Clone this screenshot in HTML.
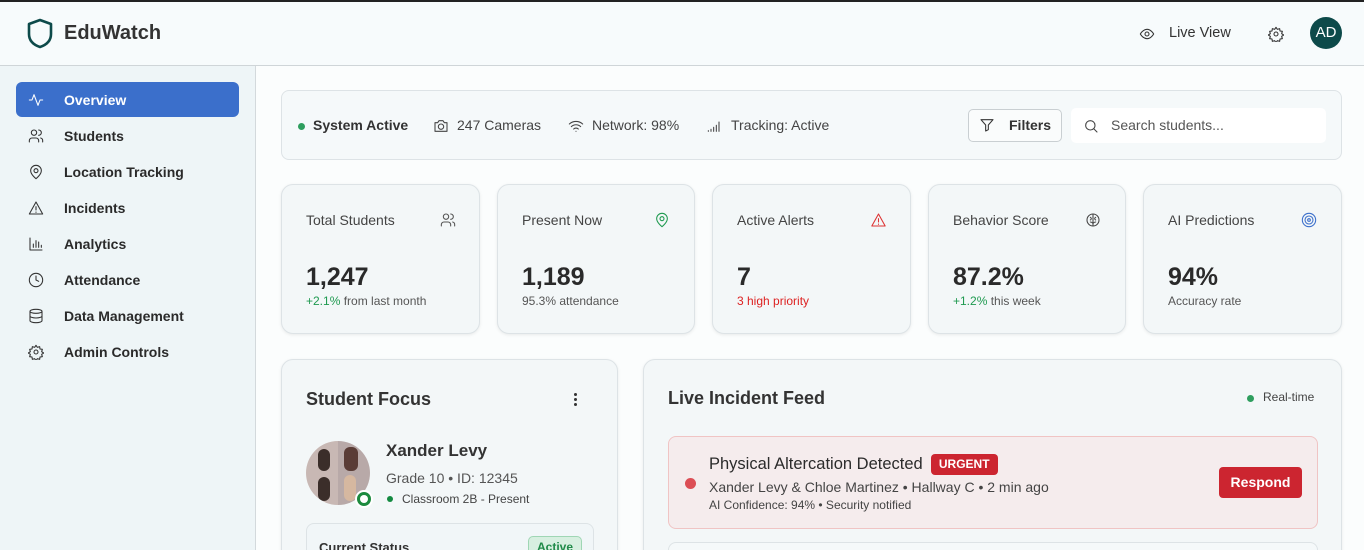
<!DOCTYPE html>
<html><head><meta charset="utf-8"><style>
*{box-sizing:border-box;margin:0;padding:0}
html,body{width:1364px;height:550px;overflow:hidden}
body{font-family:"Liberation Sans",sans-serif;color:#2b2b2b;background:#fbfdfd;position:relative}
#wrap{position:absolute;left:0;top:0;width:1364px;height:550px;overflow:hidden}
.abs{position:absolute}
.hdr{left:0;top:0;width:1364px;height:66px;background:#f7fbfc;border-top:2px solid #222;border-bottom:1px solid #cfd5d8}
.side{left:0;top:66px;width:256px;height:484px;background:#eef5f7;border-right:1px solid #d3d9dc}
.nav{position:absolute;left:16px;width:223px;height:35px;border-radius:6px;display:flex;align-items:center;font-size:14px;font-weight:bold;color:#2a2a2a}
.nav svg{position:absolute;left:12px}
.nav span{position:absolute;left:48px}
.card{position:absolute;background:#f3f7f8;border:1px solid #dde3e6;border-radius:12px;box-shadow:0 1px 3px rgba(0,0,0,.08)}
.st .t{position:absolute;left:24px;top:27px;font-size:14px;color:#444}
.st .v{position:absolute;left:24px;top:78px;font-size:25px;font-weight:bold;color:#2a2a2a}
.st .s{position:absolute;left:24px;top:109px;font-size:12px;color:#555}
.st svg{position:absolute;top:27px}
svg{fill:none;stroke-width:1.6;stroke-linecap:round;stroke-linejoin:round}
.g{color:#1f9a50}
</style></head><body><div id="wrap">
<div class="abs hdr">
 <svg class="abs" style="left:27px;top:16px" width="26" height="31" viewBox="0 0 26 31"><path d="M13 2 L24 6 V16 C24 23 19 27 13 29 C7 27 2 23 2 16 V6 Z" stroke="#0d4a4a" stroke-width="2.6"/></svg>
 <div class="abs" style="left:64px;top:20px;font-size:20px;font-weight:bold;color:#333">EduWatch</div>
 <svg class="abs" style="left:1139px;top:24px" width="16" height="16" viewBox="0 0 24 24" stroke="#333"><path d="M2 12s4-7 10-7 10 7 10 7-4 7-10 7S2 12 2 12z"/><circle cx="12" cy="12" r="3"/></svg>
 <div class="abs" style="left:1169px;top:23px;font-size:14.5px;color:#333">Live View</div>
 <svg class="abs" style="left:1268px;top:24px" width="16" height="16" viewBox="0 0 24 24" stroke="#333"><circle cx="12" cy="12" r="3"/><path d="M12 2l2 3 3.5-1 .5 3.5 3.5.5-1 3.5 3 2-3 2 1 3.5-3.5.5-.5 3.5-3.5-1-2 3-2-3-3.5 1-.5-3.5-3.5-.5 1-3.5-3-2 3-2-1-3.5 3.5-.5.5-3.5 3.5 1z"/></svg>
 <div class="abs" style="left:1310px;top:15px;width:32px;height:32px;border-radius:50%;background:#0d4a4a;color:#fff;font-size:15px;text-align:center;line-height:32px">AD</div>
</div>
<div class="abs side">
 <div class="nav" style="top:16px;background:#3b6fcb;color:#fff"><svg width="16" height="16" viewBox="0 0 24 24" stroke="#fff"><path d="M2 12h4l3-8 6 16 3-8h4"/></svg><span>Overview</span></div>
 <div class="nav" style="top:52px"><svg width="16" height="16" viewBox="0 0 24 24" stroke="#333"><circle cx="9" cy="7" r="4"/><path d="M2 21v-2a4 4 0 014-4h6a4 4 0 014 4v2M16 3a4 4 0 010 8M22 21v-2a4 4 0 00-3-4"/></svg><span>Students</span></div>
 <div class="nav" style="top:88px"><svg width="16" height="16" viewBox="0 0 24 24" stroke="#333"><path d="M20 10c0 6-8 12-8 12S4 16 4 10a8 8 0 0116 0z"/><circle cx="12" cy="10" r="3"/></svg><span>Location Tracking</span></div>
 <div class="nav" style="top:124px"><svg width="16" height="16" viewBox="0 0 24 24" stroke="#333"><path d="M12 3L2 21h20z M12 10v5 M12 18v.5"/></svg><span>Incidents</span></div>
 <div class="nav" style="top:160px"><svg width="16" height="16" viewBox="0 0 24 24" stroke="#333"><path d="M3 3v18h18M8 17v-5M12 17V7M16 17v-8M20 17v-3"/></svg><span>Analytics</span></div>
 <div class="nav" style="top:196px"><svg width="16" height="16" viewBox="0 0 24 24" stroke="#333"><circle cx="12" cy="12" r="10"/><path d="M12 6v6l4 2"/></svg><span>Attendance</span></div>
 <div class="nav" style="top:232px"><svg width="16" height="16" viewBox="0 0 24 24" stroke="#333"><ellipse cx="12" cy="5" rx="9" ry="3"/><path d="M3 5v14c0 1.7 4 3 9 3s9-1.3 9-3V5M3 12c0 1.7 4 3 9 3s9-1.3 9-3"/></svg><span>Data Management</span></div>
 <div class="nav" style="top:268px"><svg width="16" height="16" viewBox="0 0 24 24" stroke="#333"><circle cx="12" cy="12" r="3"/><path d="M12 2l2 3 3.5-1 .5 3.5 3.5.5-1 3.5 3 2-3 2 1 3.5-3.5.5-.5 3.5-3.5-1-2 3-2-3-3.5 1-.5-3.5-3.5-.5 1-3.5-3-2 3-2-1-3.5 3.5-.5.5-3.5 3.5 1z"/></svg><span>Admin Controls</span></div>
</div>

<div class="card" style="left:281px;top:90px;width:1061px;height:70px;border-radius:8px;box-shadow:none;background:#f5f9fa">
 <div class="abs" style="left:16px;top:32px;width:7px;height:7px;border-radius:50%;background:#2e9e5e"></div>
 <div class="abs" style="left:31px;top:26px;font-size:14px;font-weight:bold;color:#333">System Active</div>
 <svg class="abs" style="left:151px;top:27px" width="16" height="16" viewBox="0 0 24 24" stroke="#444"><path d="M3 7h4l2-3h6l2 3h4v13H3z"/><circle cx="12" cy="13" r="4"/></svg>
 <div class="abs" style="left:175px;top:26px;font-size:14px;color:#444">247 Cameras</div>
 <svg class="abs" style="left:286px;top:27px" width="16" height="16" viewBox="0 0 24 24" stroke="#444"><path d="M2 9a15 15 0 0120 0M5 13a10 10 0 0114 0M8.5 16.5a5 5 0 017 0M12 20h.01"/></svg>
 <div class="abs" style="left:310px;top:26px;font-size:14px;color:#444">Network: 98%</div>
 <svg class="abs" style="left:425px;top:27px" width="16" height="16" viewBox="0 0 24 24" stroke="#444"><path d="M2 20v-1M6 20v-3M10 20v-6M14 20v-9M18 20V6"/></svg>
 <div class="abs" style="left:449px;top:26px;font-size:14px;color:#444">Tracking: Active</div>
 <div class="abs" style="left:686px;top:18px;width:94px;height:33px;border:1px solid #c9cfd2;border-radius:5px;background:#fafcfc"></div>
 <svg class="abs" style="left:697px;top:26px" width="16" height="16" viewBox="0 0 24 24" stroke="#333"><path d="M3 4h18l-7 8v7l-4 2v-9z"/></svg>
 <div class="abs" style="left:727px;top:26px;font-size:14px;font-weight:bold;color:#333">Filters</div>
 <div class="abs" style="left:789px;top:17px;width:255px;height:35px;border-radius:5px;background:#fff"></div>
 <svg class="abs" style="left:801px;top:27px" width="16" height="16" viewBox="0 0 24 24" stroke="#444"><circle cx="11" cy="11" r="7"/><path d="M21 21l-5-5"/></svg>
 <div class="abs" style="left:829px;top:26px;font-size:14px;color:#555">Search students...</div>
</div>

<div class="card st" style="left:281px;top:184px;width:199px;height:150px"><div class="t">Total Students</div><svg style="left:158px" width="16" height="16" viewBox="0 0 24 24" stroke="#555"><circle cx="9" cy="7" r="4"/><path d="M2 21v-2a4 4 0 014-4h6a4 4 0 014 4v2M16 3a4 4 0 010 8M22 21v-2a4 4 0 00-3-4"/></svg><div class="v">1,247</div><div class="s"><span class="g">+2.1%</span> from last month</div></div>
<div class="card st" style="left:497px;top:184px;width:198px;height:150px"><div class="t">Present Now</div><svg style="left:156px" width="16" height="16" viewBox="0 0 24 24" stroke="#1f9a50"><path d="M20 10c0 6-8 12-8 12S4 16 4 10a8 8 0 0116 0z"/><circle cx="12" cy="10" r="3"/></svg><div class="v">1,189</div><div class="s">95.3% attendance</div></div>
<div class="card st" style="left:712px;top:184px;width:199px;height:150px"><div class="t">Active Alerts</div><svg style="left:157px" width="17" height="16" viewBox="0 0 24 24" stroke="#d33"><path d="M12 3L2 21h20z M12 10v5 M12 18v.5"/></svg><div class="v">7</div><div class="s" style="color:#d22">3 high priority</div></div>
<div class="card st" style="left:928px;top:184px;width:198px;height:150px"><div class="t">Behavior Score</div><svg style="left:156px" width="16" height="16" viewBox="0 0 24 24" stroke="#444"><circle cx="12" cy="12" r="9"/><path d="M12 3v18M8 8c2 1 2 3 0 4M16 8c-2 1-2 3 0 4M8 15c2 0 3 1 4 2M16 15c-2 0-3 1-4 2"/></svg><div class="v">87.2%</div><div class="s"><span class="g">+1.2%</span> this week</div></div>
<div class="card st" style="left:1143px;top:184px;width:199px;height:150px"><div class="t">AI Predictions</div><svg style="left:157px" width="16" height="16" viewBox="0 0 24 24" stroke="#3b6fcb" stroke-width="2"><circle cx="12" cy="12" r="10"/><circle cx="12" cy="12" r="6"/><circle cx="12" cy="12" r="2"/></svg><div class="v">94%</div><div class="s">Accuracy rate</div></div>

<div class="card" style="left:281px;top:359px;width:337px;height:230px">
 <div class="abs" style="left:24px;top:29px;font-size:18px;font-weight:bold;color:#333">Student Focus</div>
 <div class="abs" style="left:292px;top:33px;width:3px;height:3px;border-radius:50%;background:#333;box-shadow:0 5px 0 #333,0 10px 0 #333"></div>
 <div class="abs" style="left:24px;top:81px;width:64px;height:64px;border-radius:50%;background:linear-gradient(90deg,#c8b8b4 50%,#b8a9a8 50%);overflow:hidden">
  <div class="abs" style="left:12px;top:8px;width:12px;height:22px;background:#3b2e2a;border-radius:6px"></div>
  <div class="abs" style="left:38px;top:6px;width:14px;height:24px;background:#5a3c36;border-radius:6px"></div>
  <div class="abs" style="left:12px;top:36px;width:12px;height:24px;background:#3b2e2a;border-radius:6px"></div>
  <div class="abs" style="left:38px;top:34px;width:12px;height:26px;background:#d6b8a0;border-radius:6px"></div>
 </div>
 <div class="abs" style="left:73px;top:130px;width:18px;height:18px;border-radius:50%;background:#1c8a3e;border:2px solid #fff"><div style="margin:3px;width:8px;height:8px;border-radius:50%;background:#fff"></div></div>
 <div class="abs" style="left:104px;top:81px;font-size:17px;font-weight:bold;color:#333">Xander Levy</div>
 <div class="abs" style="left:104px;top:110px;font-size:14px;color:#555">Grade 10 • ID: 12345</div>
 <div class="abs" style="left:105px;top:136px;width:6px;height:6px;border-radius:50%;background:#138a40"></div>
 <div class="abs" style="left:120px;top:132px;font-size:12px;color:#444">Classroom 2B - Present</div>
 <div class="abs" style="left:24px;top:163px;width:288px;height:60px;border:1px solid #dde3e6;border-radius:8px;background:#f1f6f8"></div>
 <div class="abs" style="left:37px;top:180px;font-size:13px;font-weight:bold;color:#333">Current Status</div>
 <div class="abs" style="left:246px;top:176px;width:54px;height:22px;border:1px solid #9fd6b4;border-radius:5px;background:#d7efe0;color:#1f8a48;font-size:12px;font-weight:bold;text-align:center;line-height:20px">Active</div>
</div>

<div class="card" style="left:643px;top:359px;width:699px;height:230px">
 <div class="abs" style="left:24px;top:28px;font-size:18px;font-weight:bold;color:#333">Live Incident Feed</div>
 <div class="abs" style="left:603px;top:35px;width:7px;height:7px;border-radius:50%;background:#2e9e5e"></div>
 <div class="abs" style="left:619px;top:30px;font-size:12px;color:#444">Real-time</div>
 <div class="abs" style="left:24px;top:76px;width:650px;height:93px;border:1px solid #f0c4c4;border-radius:8px;background:#f5eced">
  <div class="abs" style="left:16px;top:41px;width:11px;height:11px;border-radius:50%;background:#dc4e55"></div>
  <div class="abs" style="left:40px;top:17px;display:flex;align-items:center;gap:8px"><span style="font-size:16.5px;color:#2b2b2b">Physical Altercation Detected</span><span style="display:inline-block;width:67px;height:21px;border-radius:4px;background:#cc2530;color:#fff;font-size:12px;font-weight:bold;text-align:center;line-height:21px">URGENT</span></div>
  <div class="abs" style="left:40px;top:42px;font-size:14px;color:#444">Xander Levy &amp; Chloe Martinez • Hallway C • 2 min ago</div>
  <div class="abs" style="left:40px;top:61px;font-size:12px;color:#444">AI Confidence: 94% • Security notified</div>
  <div class="abs" style="left:550px;top:30px;width:83px;height:31px;border-radius:4px;background:#cc2530;color:#fff;font-size:14px;font-weight:bold;text-align:center;line-height:31px">Respond</div>
 </div>
 <div class="abs" style="left:24px;top:182px;width:650px;height:40px;border:1px solid #dde3e6;border-radius:8px;background:#f5f9fa"></div>
</div>
</div></body></html>
